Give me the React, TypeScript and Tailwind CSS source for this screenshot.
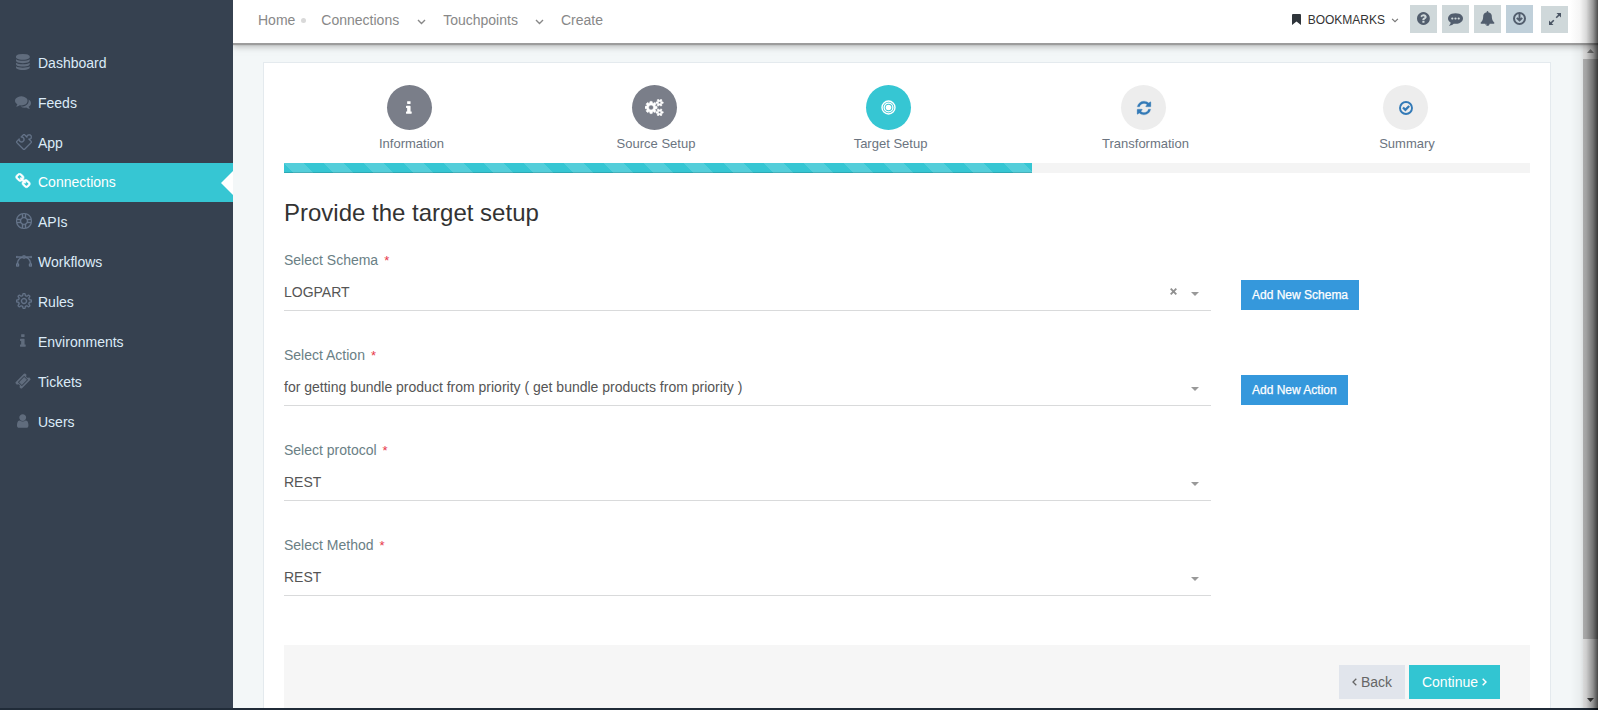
import React from 'react';
import { SlPuzzle, SlSupport, SlVector, SlSettings } from 'react-icons/sl';

type GlyphProps = { d: string; w?: number; size?: number; stroke?: number; className?: string };

function Glyph({ d, w = 1792, size = 14, stroke = 0, className = '' }: GlyphProps) {
  return (
    <svg
      viewBox={`0 0 ${w} 1792`}
      width={(size * w) / 1792}
      height={size}
      fill="currentColor"
      stroke={stroke ? 'currentColor' : 'none'}
      strokeWidth={stroke}
      className={className}
    >
      <path d={d} />
    </svg>
  );
}

const DATABASE =
  'M768 768q237 0 443-43t325-127v170q0 69-103 128t-280 93.5-385 34.5-385-34.5-280-93.5-103-128v-170q119 84 325 127t443 43zm0 768q237 0 443-43t325-127v170q0 69-103 128t-280 93.5-385 34.5-385-34.5-280-93.5-103-128v-170q119 84 325 127t443 43zm0-384q237 0 443-43t325-127v170q0 69-103 128t-280 93.5-385 34.5-385-34.5-280-93.5-103-128v-170q119 84 325 127t443 43zm0-1152q208 0 385 34.5t280 93.5 103 128v128q0 69-103 128t-280 93.5-385 34.5-385-34.5-280-93.5-103-128v-128q0-69 103-128t280-93.5 385-34.5z';
const COMMENTS =
  'M1408 768q0 139-94 257t-256.5 186.5-353.5 68.5q-86 0-176-16-124 88-278 128-36 9-86 16h-3q-11 0-20.5-8t-11.5-21q-1-3-1-6.5t.5-6.5 2-6l2.5-5 3.5-5.5 4-5 4.5-5 4-4.5q5-6 23-25t26-29.5 22.5-29 25-38.5 20.5-44q-124-72-195-177t-71-224q0-139 94-257t256.5-186.5 353.5-68.5 353.5 68.5 256.5 186.5 94 257zm384 256q0 120-71 224.5t-195 176.5q10 24 20.5 44t25 38.5 22.5 29 26 29.5 23 25q1 1 4 4.5t4.5 5 4 5 3.5 5.5l2.5 5 2 6 .5 6.5-1 6.5q-3 14-13 22t-22 7q-50-7-86-16-154-40-278-128-90 16-176 16-271 0-472-132 58 4 88 4 161 0 309-45t264-129q125-92 192-212t67-254q0-77-23-152 129 71 204 178t75 230z';
const LINK =
  'M1520 1216q0-40-28-68l-208-208q-28-28-68-28-42 0-72 32 3 3 19 18.5t21.5 21.5 15 19 13 25.5 3.5 27.5q0 40-28 68t-68 28q-15 0-27.5-3.5t-25.5-13-19-15-21.5-21.5-18.5-19q-33 31-33 73 0 40 28 68l206 207q27 27 68 27 40 0 68-26l147-146q28-28 28-67zm-703-705q0-40-28-68l-206-207q-28-28-68-28-39 0-68 27l-147 146q-28 28-28 67 0 40 28 68l208 208q27 27 68 27 42 0 72-31-3-3-19-18.5t-21.5-21.5-15-19-13-25.5-3.5-27.5q0-40 28-68t68-28q15 0 27.5 3.5t25.5 13 19 15 21.5 21.5 18.5 19q33-31 33-73zm895 705q0 120-85 203l-147 146q-83 83-203 83-121 0-204-85l-206-207q-83-83-83-203 0-123 88-209l-88-88q-86 88-208 88-120 0-204-84l-208-208q-84-84-84-204t85-203l147-146q83-83 203-83 121 0 204 85l206 207q83 83 83 203 0 123-88 209l88 88q86-88 208-88 120 0 204 84l208 208q84 84 84 204z';
const INFO =
  'M640 1344v128q0 26-19 45t-45 19h-512q-26 0-45-19t-19-45v-128q0-26 19-45t45-19h64v-384h-64q-26 0-45-19t-19-45v-128q0-26 19-45t45-19h384q26 0 45 19t19 45v576h64q26 0 45 19t19 45zm-128-1152v192q0 26-19 45t-45 19h-256q-26 0-45-19t-19-45v-192q0-26 19-45t45-19h256q26 0 45 19t19 45z';
const TICKET =
  'M1024 452l316 316-572 572-316-316zm-211 979l618-618q19-19 19-45t-19-45l-362-362q-18-18-45-18t-45 18l-618 618q-19 19-19 45t19 45l362 362q18 18 45 18t45-18zm889-637l-907 908q-37 37-90.5 37t-90.5-37l-126-126q56-56 56-136t-56-136-136-56-136 56l-125-126q-37-37-37-90.5t37-90.5l907-906q37-37 90.5-37t90.5 37l125 125q-56 56-56 136t56 136 136 56 136-56l126 125q37 37 37 90.5t-37 90.5z';
const USER =
  'M1280 1399q0 109-62.5 187t-150.5 78h-854q-88 0-150.5-78t-62.5-187q0-85 8.5-160.5t31.5-152 58.5-131 94-89 134.5-34.5q131 128 313 128t313-128q76 0 134.5 34.5t94 89 58.5 131 31.5 152 8.5 160.5zm-256-887q0 159-112.5 271.5t-271.5 112.5-271.5-112.5-112.5-271.5 112.5-271.5 271.5-112.5 271.5 112.5 112.5 271.5z';
const QUESTION =
  'M896 1376v-192q0-14-9-23t-23-9h-192q-14 0-23 9t-9 23v192q0 14 9 23t23 9h192q14 0 23-9t9-23zm256-672q0-88-55.5-163t-138.5-116-170-41q-243 0-371 213-15 24 8 42l132 100q7 6 19 6 16 0 25-12 53-68 86-92 34-24 86-24 48 0 85.5 26t37.5 59q0 38-20 61t-68 45q-63 28-115.5 86.5t-52.5 125.5v36q0 14 9 23t23 9h192q14 0 23-9t9-23q0-19 21.5-49.5t54.5-49.5q32-18 49-28.5t46-35 44.5-48 28-60.5 12.5-81zm384 192q0 209-103 385.5t-279.5 279.5-385.5 103-385.5-103-279.5-279.5-103-385.5 103-385.5 279.5-279.5 385.5-103 385.5 103 279.5 279.5 103 385.5z';
const COMMENTING =
  'M640 896q0-53-37.5-90.5t-90.5-37.5-90.5 37.5-37.5 90.5 37.5 90.5 90.5 37.5 90.5-37.5 37.5-90.5zm384 0q0-53-37.5-90.5t-90.5-37.5-90.5 37.5-37.5 90.5 37.5 90.5 90.5 37.5 90.5-37.5 37.5-90.5zm384 0q0-53-37.5-90.5t-90.5-37.5-90.5 37.5-37.5 90.5 37.5 90.5 90.5 37.5 90.5-37.5 37.5-90.5zm384 0q0 174-120 321.5t-326 233-450 85.5q-110 0-211-18-173 173-435 229-52 10-86 13-12 1-22-6t-13-18q-4-15 20-37 5-5 23.5-21.5t25.5-23.5 23.5-25.5 24-31.5 20.5-37 20-48 14.5-57.5 12.5-72.5q-146-90-229.5-216.5t-83.5-269.5q0-174 120-321.5t326-233 450-85.5 450 85.5 326 233 120 321.5z';
const BELL =
  'M912 1696q0-16-16-16-59 0-101.5-42.5t-42.5-101.5q0-16-16-16t-16 16q0 73 51.5 124.5t124.5 51.5q16 0 16-16zm816-288q0 52-38 90t-90 38h-448q0 106-75 181t-181 75-181-75-75-181h-448q-52 0-90-38t-38-90q50-42 91-88t85-119.5 74.5-158.5 50-206 19.5-260q0-152 117-282.5t307-158.5q-8-19-8-39 0-40 28-68t68-28 68 28 28 68q0 20-8 39 190 28 307 158.5t117 282.5q0 139 19.5 260t50 206 74.5 158.5 85 119.5 91 88z';
const REFRESH =
  'M1639 1056q0 5-1 7-64 268-268 434.5t-478 166.5q-146 0-282.5-55t-243.5-157l-129 129q-19 19-45 19t-45-19-19-45v-448q0-26 19-45t45-19h448q26 0 45 19t19 45-19 45l-137 137q71 66 161 102t187 36q134 0 250-65t186-179q11-17 53-117 8-23 30-23h192q13 0 22.5 9.5t9.5 22.5zm25-800v448q0 26-19 45t-45 19h-448q-26 0-45-19t-19-45 19-45l138-138q-148-137-349-137-134 0-250 65t-186 179q-11 17-53 117-8 23-30 23h-199q-13 0-22.5-9.5t-9.5-22.5v-7q65-268 270-434.5t480-166.5q146 0 284 55.5t245 156.5l130-129q19-19 45-19t45 19 19 45z';
const COGS =
  'M896 896q0-106-75-181t-181-75-181 75-75 181 75 181 181 75 181-75 75-181zm768 512q0-52-38-90t-90-38-90 38-38 90q0 53 37.5 90.5t90.5 37.5 90.5-37.5 37.5-90.5zm0-1024q0-52-38-90t-90-38-90 38-38 90q0 53 37.5 90.5t90.5 37.5 90.5-37.5 37.5-90.5zm-384 421v185q0 10-7 19.5t-16 10.5l-155 24q-11 35-32 76 34 48 90 115 7 11 7 20 0 12-7 19-23 30-82.5 89.5t-78.5 59.5q-11 0-21-7l-115-90q-37 19-77 31-11 108-23 155-7 24-30 24h-186q-11 0-20-7.5t-10-17.5l-23-153q-34-10-75-31l-118 89q-7 7-20 7-11 0-21-8-144-133-144-160 0-9 7-19 10-14 41-53t47-61q-23-44-35-82l-152-24q-10-1-17-9.5t-7-19.5v-185q0-10 7-19.5t16-10.5l155-24q11-35 32-76-34-48-90-115-7-11-7-20 0-12 7-20 22-30 82-89t79-59q11 0 21 7l115 90q34-18 77-32 11-108 23-154 7-24 30-24h186q11 0 20 7.5t10 17.5l23 153q34 10 75 31l118-89q8-7 20-7 11 0 21 8 144 133 144 160 0 8-7 19-12 16-42 54t-45 60q23 48 34 82l152 23q10 2 17 10.5t7 19.5zm640 533v140q0 16-149 31-12 27-30 52 51 113 51 138 0 4-4 7-122 71-124 71-8 0-46-47t-52-68q-20 2-30 2t-30-2q-14 21-52 68t-46 47q-2 0-124-71-4-3-4-7 0-25 51-138-18-25-30-52-149-15-149-31v-140q0-16 149-31 13-29 30-52-51-113-51-138 0-4 4-7 4-2 35-20t59-34 30-16q8 0 46 46.5t52 67.5q20-2 30-2t30 2q51-71 92-112l6-2q4 0 124 70 4 3 4 7 0 25-51 138 17 23 30 52 149 15 149 31zm0-1024v140q0 16-149 31-12 27-30 52 51 113 51 138 0 4-4 7-122 71-124 71-8 0-46-47t-52-68q-20 2-30 2t-30-2q-14 21-52 68t-46 47q-2 0-124-71-4-3-4-7 0-25 51-138-18-25-30-52-149-15-149-31v-140q0-16 149-31 13-29 30-52-51-113-51-138 0-4 4-7 4-2 35-20t59-34 30-16q8 0 46 46.5t52 67.5q20-2 30-2t30 2q51-71 92-112l6-2q4 0 124 70 4 3 4 7 0 25-51 138 17 23 30 52 149 15 149 31z';

const line = 'relative left-px [stroke-width:24] text-[#67758b]';

const menu = [
  { label: 'Dashboard', icon: <Glyph d={DATABASE} w={1536} size={16} /> },
  { label: 'Feeds', icon: <Glyph d={COMMENTS} size={16} /> },
  { label: 'App', icon: <SlPuzzle size={16} className={line} /> },
  { label: 'Connections', icon: <Glyph d={LINK} size={16} stroke={70} />, active: true },
  { label: 'APIs', icon: <SlSupport size={16} className={line} /> },
  { label: 'Workflows', icon: <SlVector size={16} className={line} /> },
  { label: 'Rules', icon: <SlSettings size={16} className={line} /> },
  { label: 'Environments', icon: <Glyph d={INFO} w={640} size={16} /> },
  { label: 'Tickets', icon: <Glyph d={TICKET} size={16} /> },
  { label: 'Users', icon: <Glyph d={USER} w={1280} size={16} /> },
];

function Sidebar() {
  return (
    <nav className="w-[233px] shrink-0 bg-[#364150] pt-[43px]">
      {menu.map((m) => (
        <div
          key={m.label}
          className={
            m.active
              ? 'relative flex h-[39px] items-center bg-[#36c6d3] pb-px text-sm text-white'
              : 'flex h-10 items-center text-sm text-[#dcebf8]'
          }
        >
          <span className={`mb-0.5 ml-[15px] flex w-4 justify-center ${m.active ? 'text-white' : 'text-[#606c7d]'}`}>
            {m.icon}
          </span>
          <span className="ml-[7px]">{m.label}</span>
          {m.active && (
            <svg className="absolute right-0 top-2" width="12" height="24" viewBox="0 0 12 24">
              <path d="M12 0v24L0 12z" fill="#fff" />
            </svg>
          )}
        </div>
      ))}
    </nav>
  );
}

function Angle({ className = '' }: { className?: string }) {
  return (
    <svg width="9" height="6" viewBox="0 0 9 6" fill="none" stroke="currentColor" strokeWidth="1.4" className={className}>
      <path d="M1 1l3.5 3.5L8 1" />
    </svg>
  );
}

function Header() {
  return (
    <header className="relative z-10 flex h-[43px] shrink-0 bg-white text-sm text-[#888] shadow-[0_2px_1px_#9c9c9c,0_4px_6px_#8888]">
      <div className="flex h-10 items-center pl-[25px]">
        <span>Home</span>
        <span className="ml-[6px] h-[5px] w-[5px] rounded-full bg-[#d9d9d9]" />
        <span className="ml-[15px]">Connections</span>
        <Angle className="ml-[18px] mt-[3px]" />
        <span className="ml-[17px]">Touchpoints</span>
        <Angle className="ml-[17px] mt-[3px]" />
        <span className="ml-[17px]">Create</span>
      </div>
      <div className="ml-auto flex items-start pr-[30px]">
        <div className="flex h-[39px] items-center text-xs text-[#333]">
          <svg width="9" height="11" viewBox="0 0 9 11" fill="#2f353b">
            <path d="M1 0h7q1 0 1 1v10L4.500 7.500 0 11V1q0-1 1-1z" />
          </svg>
          <span className="ml-[7px]">BOOKMARKS</span>
          <Angle className="ml-[6px] mt-0.5 h-[5px] w-[8px] text-[#777]" />
        </div>
        <div className="ml-[11px] mt-[5px] flex gap-[5px] text-[#525e6e]">
          <span className="flex h-7 w-[27px] justify-center bg-[#cfd8da] pt-[6px]">
            <Glyph d={QUESTION} w={1536} size={15} />
          </span>
          <span className="flex h-7 w-[27px] justify-center bg-[#cfd8da] pt-[6px]">
            <Glyph d={COMMENTING} size={15} />
          </span>
          <span className="flex h-7 w-[27px] justify-center bg-[#cfd8da] pt-[6px]">
            <Glyph d={BELL} size={15} />
          </span>
          <span className="flex h-7 w-[27px] justify-center bg-[#c0d0da] pt-[7px]">
            <svg width="13" height="13" viewBox="0 0 13 13">
              <circle cx="6.5" cy="6.5" r="5.5" fill="none" stroke="currentColor" strokeWidth="2" />
              <path d="M6.500 2v6M3.800 5.800l2.700 2.700 2.700-2.700" fill="none" stroke="currentColor" strokeWidth="1.900" />
            </svg>
          </span>
        </div>
        <span className="ml-2 mt-[6px] flex h-[27px] w-[27px] justify-center bg-[#cfd8da] pt-[7px] text-[#4a5564]">
          <svg width="12" height="12" viewBox="0 0 12 12" fill="currentColor">
            <path d="M7.500 0H12v4.500zM4.500 12H0V7.500z" />
            <path d="M10.500 1.500L7.200 4.800M1.500 10.500l3.300-3.300" stroke="currentColor" strokeWidth="1.600" />
          </svg>
        </span>
      </div>
    </header>
  );
}

function Step({ label, circle, width, children }: { label: string; circle: string; width: string; children: React.ReactNode }) {
  return (
    <div className={`flex shrink-0 flex-col items-center ${width}`}>
      <div className={`flex h-[45px] w-[45px] items-center justify-center rounded-full ${circle}`}>{children}</div>
      <span className="mt-[5px] text-[13px] leading-[18px] text-[#6b7480]">{label}</span>
    </div>
  );
}

function Field({ label, value, clearable, action }: { label: string; value: string; clearable?: boolean; action?: string }) {
  return (
    <div className="flex h-[95px]">
      <div className="w-[927px]">
        <div className="h-5 text-sm leading-5 text-[#6a8085]">
          {label}
          <span className="ml-[6px] text-[13px] text-[#e7384a]">*</span>
        </div>
        <div className="mt-2 flex h-[33px] items-start border-b border-[#d9dadb] pt-1 text-sm leading-5 text-[#555]">
          <span>{value}</span>
          <span className="ml-auto flex pr-3 text-[#999]">
            {clearable && (
              <svg width="7" height="7" viewBox="0 0 7 7" className="mr-[14px] mt-[6px]" stroke="#909090" strokeWidth="1.900">
                <path d="M.7.7l5.600 5.600M6.300.7L.7 6.300" />
              </svg>
            )}
            <svg width="8" height="4" viewBox="0 0 8 4" className="mt-[10px]" fill="currentColor">
              <path d="M0 0h8L4 4z" />
            </svg>
          </span>
        </div>
      </div>
      {action && (
        <button className="ml-[30px] mt-[30px] h-[30px] bg-[#3598dc] px-[11px] text-xs text-white [-webkit-text-stroke:0.25px_white]">
          {action}
        </button>
      )}
    </div>
  );
}

export default function App() {
  return (
    <div className="relative flex h-[710px] w-[1598px] flex-col overflow-hidden bg-[#f3f7f8] font-['Liberation_Sans',Arial,sans-serif]">
      <div className="flex h-[708px] shrink-0">
        <Sidebar />
        <div className="flex min-w-0 flex-1 flex-col overflow-hidden">
          <Header />
          <div className="flex min-h-0 flex-1">
            <main className="ml-[30px] mt-[19px] w-[1288px] overflow-hidden border border-b-0 border-[#e4eaee] bg-white px-5 pt-[22px]">
              <div className="flex h-[78px]">
                <Step label="Information" circle="mr-[5px] bg-[#7a7e89] text-white" width="w-[255px]">
                  <Glyph d={INFO} w={640} size={16} />
                </Step>
                <Step label="Source Setup" circle="mr-[3px] bg-[#7a7e89] text-white" width="w-[234px]">
                  <Glyph d={COGS} w={1920} size={17} stroke={60} />
                </Step>
                <Step label="Target Setup" circle="mr-1 bg-[#36c6d3] text-white" width="w-[235px]">
                  <svg width="15" height="15" viewBox="0 0 15 15" fill="none" stroke="currentColor">
                    <circle cx="7.5" cy="7.500" r="6.500" strokeWidth="1.400" />
                    <circle cx="7.5" cy="7.500" r="4.400" strokeWidth="1.300" />
                    <circle cx="7.5" cy="7.500" r="2.800" fill="currentColor" stroke="none" />
                  </svg>
                </Step>
                <Step label="Transformation" circle="mr-1 bg-[#ededed] text-[#337ab7]" width="w-[275px]">
                  <Glyph d={REFRESH} size={16} stroke={30} />
                </Step>
                <Step label="Summary" circle="mr-[3px] bg-[#ededed] text-[#337ab7]" width="w-[248px]">
                  <svg width="14" height="14" viewBox="0 0 14 14" fill="none" stroke="currentColor">
                    <circle cx="7" cy="7" r="6" strokeWidth="1.900" />
                    <path d="M4 6.500l2.400 2.300L10.200 5" strokeWidth="2.300" />
                  </svg>
                </Step>
              </div>
              <div className="h-[10px] w-[1246px] bg-[#f4f4f4]">
                <div className="h-full w-3/5 bg-[#36c6d3] bg-[linear-gradient(45deg,rgba(255,255,255,.15)_25%,transparent_25%,transparent_50%,rgba(255,255,255,.15)_50%,rgba(255,255,255,.15)_75%,transparent_75%,transparent)] bg-[length:40px_40px] shadow-[inset_0_-1px_0_rgba(0,0,0,.15)]" />
              </div>
              <h3 className="mt-[25px] text-2xl leading-[30px] text-[#333]">Provide the target setup</h3>
              <div className="mt-[22px]">
                <Field label="Select Schema" value="LOGPART" clearable action="Add New Schema" />
                <Field
                  label="Select Action"
                  value="for getting bundle product from priority ( get bundle products from priority )"
                  action="Add New Action"
                />
                <Field label="Select protocol" value="REST" />
                <Field label="Select Method" value="REST" />
              </div>
              <div className="mt-[15px] flex h-[80px] w-[1246px] items-start justify-end gap-1 bg-[#f6f6f6] pr-[30px] pt-5 text-sm">
                <button className="flex h-[34px] w-[66px] items-center justify-center gap-1 bg-[#e1e5ec] text-[#666]">
                  <svg width="5" height="8" viewBox="0 0 5 8" fill="none" stroke="currentColor" strokeWidth="1.300">
                    <path d="M4.300.7L1 4l3.300 3.300" />
                  </svg>
                  Back
                </button>
                <button className="flex h-[34px] w-[91px] items-center justify-center gap-1 bg-[#32c5d2] text-white">
                  Continue
                  <svg width="5" height="8" viewBox="0 0 5 8" fill="none" stroke="currentColor" strokeWidth="1.500">
                    <path d="M.7.7L4 4 .7 7.300" />
                  </svg>
                </button>
              </div>
            </main>
            <div className="ml-auto flex w-[15px] flex-col items-center bg-[#f1f1f1] pt-[3px]">
              <svg width="7" height="13" viewBox="0 0 7 13" fill="#8a8a8a">
                <path d="M3.500 3L7 7H0z" />
              </svg>
              <div className="h-[580px] w-full bg-[#bdbdbd] pr-0.5" />
              <svg width="7" height="4" viewBox="0 0 7 4" fill="#444" className="mb-[6px] mt-auto">
                <path d="M0 0h7L3.500 4z" />
              </svg>
            </div>
          </div>
        </div>
      </div>
      <div className="h-0.5 shrink-0 bg-[#202b38]" />
      <div className="pointer-events-none absolute inset-y-0 right-0 z-20 w-7 bg-[linear-gradient(to_right,transparent,rgba(0,0,0,.04)_35%,rgba(0,0,0,.15)_58%,rgba(0,0,0,.4)_82%,rgba(0,0,0,.7))]" />
    </div>
  );
}
